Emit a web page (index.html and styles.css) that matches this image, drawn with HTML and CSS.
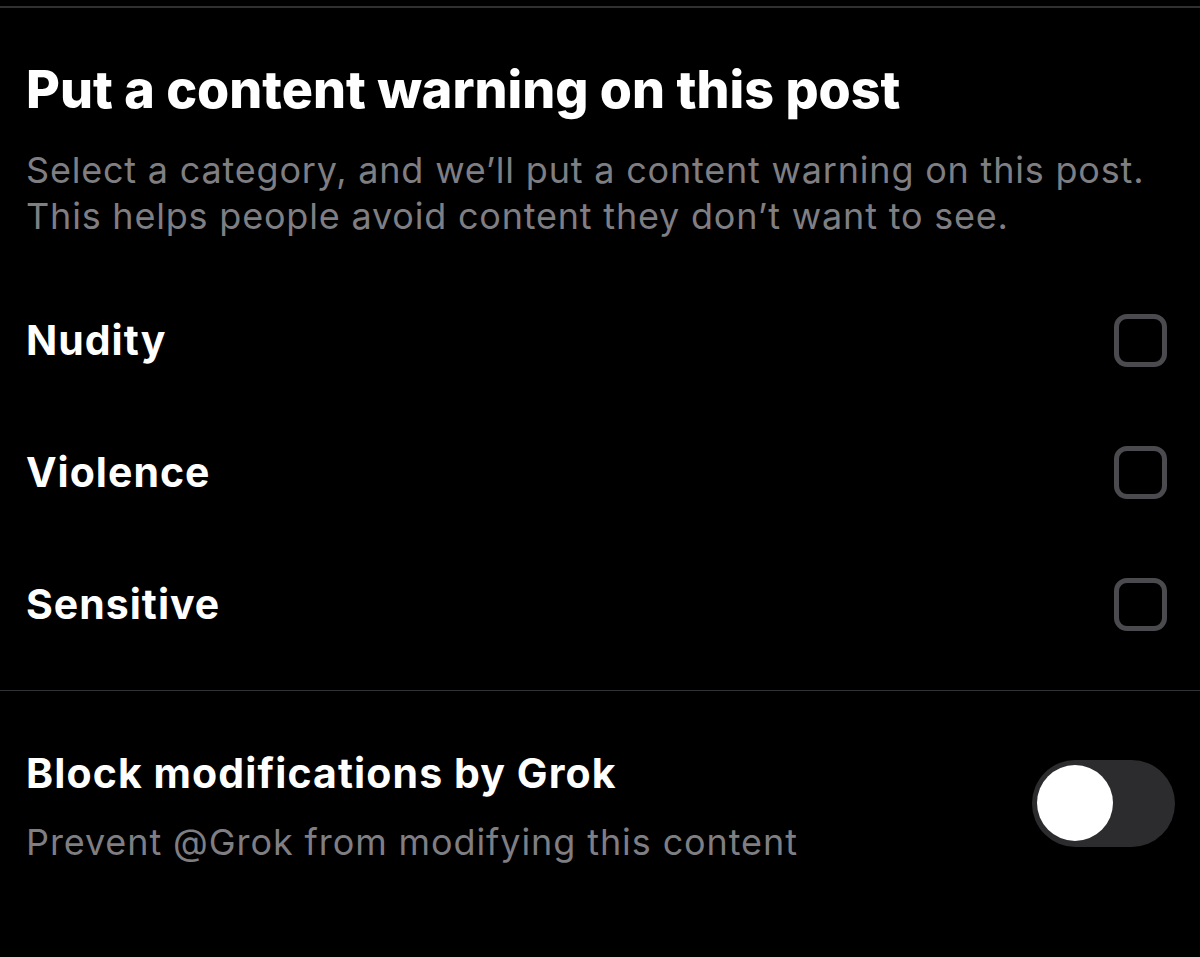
FILE: index.html
```html
<!DOCTYPE html>
<html lang="en">
<head>
<meta charset="utf-8">
<title>Content warning</title>
<link rel="stylesheet" href="styles.css">
</head>
<body>
<div class="screen">
  <div class="topline"></div>
  <header class="intro">
    <h1 class="title">Put a content warning on this post</h1>
    <p class="desc">Select a category, and we’ll put a content warning on this post.<br>This helps people avoid content they don’t want to see.</p>
  </header>
  <ul class="options">
    <li class="option"><span class="option-label">Nudity</span><span class="checkbox"></span></li>
    <li class="option"><span class="option-label">Violence</span><span class="checkbox"></span></li>
    <li class="option"><span class="option-label">Sensitive</span><span class="checkbox"></span></li>
  </ul>
  <div class="divider"></div>
  <section class="setting">
    <div class="setting-text">
      <div class="setting-title">Block modifications by Grok</div>
      <div class="setting-desc">Prevent @Grok from modifying this content</div>
    </div>
    <div class="toggle"><span class="knob"></span></div>
  </section>
</div>
</body>
</html>
```
FILE: styles.css
```css
html, body {
  margin: 0;
  padding: 0;
  background: #000;
}
.screen {
  width: 1200px;
  height: 957px;
  background: #000;
  color: #fff;
  font-family: Inter, "Noto Sans", sans-serif;
  overflow: hidden;
}
.topline {
  margin-top: 6px;
  height: 2px;
  background: #303030;
}
.intro {
  padding: 52px 26px 0 26px;
}
.title {
  margin: 0;
  font-size: 52px;
  line-height: 60px;
  font-weight: 800;
  letter-spacing: 0;
}
.desc {
  margin: 27px 0 0 0;
  font-size: 36px;
  line-height: 46px;
  font-weight: 400;
  letter-spacing: 0.8px;
  color: #7e7e83;
}
.options {
  list-style: none;
  margin: 35px 0 0 0;
  padding: 0 33px 0 26px;
}
.option {
  height: 132px;
  display: flex;
  align-items: center;
  justify-content: space-between;
}
.option-label {
  font-size: 41px;
  line-height: 48px;
  font-weight: 700;
  letter-spacing: 1px;
}
.checkbox {
  box-sizing: border-box;
  width: 53px;
  height: 53px;
  border: 5px solid #4b4b4f;
  border-radius: 13px;
}
.divider {
  margin-top: 20px;
  height: 1px;
  background: #2f3336;
}
.setting {
  display: flex;
  align-items: center;
  justify-content: space-between;
  padding: 58px 25px 0 26px;
}
.setting-title {
  font-size: 41px;
  line-height: 48px;
  font-weight: 700;
  letter-spacing: 1.1px;
}
.setting-desc {
  margin-top: 22px;
  font-size: 36px;
  line-height: 46px;
  letter-spacing: 0.9px;
  color: #7e7e83;
}
.toggle {
  box-sizing: border-box;
  width: 143px;
  height: 87px;
  border-radius: 44px;
  background: #2c2c2e;
  display: flex;
  align-items: center;
  padding-left: 5px;
  margin-bottom: 8px;
}
.knob {
  width: 76px;
  height: 76px;
  border-radius: 50%;
  background: #fff;
}
```
